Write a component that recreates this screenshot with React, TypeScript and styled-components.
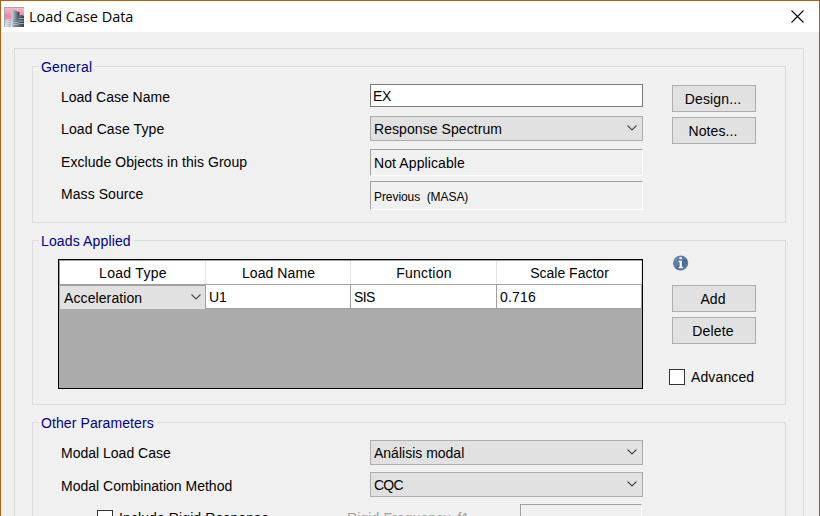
import React from "react";
import styled, { createGlobalStyle } from "styled-components";

const GlobalStyle = createGlobalStyle`
  * { box-sizing: border-box; }
  body { margin: 0; overflow: hidden; background: #f0f0f0; }
`;

const Window = styled.div`
  display: flex;
  flex-direction: column;
  width: 820px;
  height: 516px;
  overflow: hidden;
  border: 1px solid #b15f14;
  border-bottom: 0;
  background: #f0f0f0;
  color: #000;
  font: 14px "Liberation Sans", Arial, sans-serif;
`;

const TitleBar = styled.header`
  display: flex;
  flex: none;
  align-items: center;
  height: 31px;
  padding: 0 15px 0 3px;
  background: #fff;
`;

const Title = styled.h1`
  flex: 1;
  margin: 0 0 0 5px;
  font: 400 14.5px/20px "Open Sans", "Noto Sans", sans-serif;
  letter-spacing: -0.03px;
`;

const CloseButton = styled.button`
  display: flex;
  padding: 0;
  border: 0;
  background: none;
`;

const Client = styled.main`
  display: flex;
  flex: none;
  height: 600px;
  padding: 16px 15px 0 13px;
`;

const Panel = styled.div`
  display: flex;
  flex: 1;
  flex-direction: column;
  gap: 17px;
  padding: 17px 17px 0;
  border: 1px solid #dcdcdc;
`;

const Group = styled.section<{ $height: number }>`
  display: flex;
  flex: none;
  flex-direction: column;
  height: ${(p) => p.$height}px;
  border: 1px solid #dcdcdc;
`;

const Text = styled.span<{ $track?: number }>`
  letter-spacing: ${(p) => p.$track ?? 0.06}px;
  white-space: pre;
`;

const Legend = styled.h2`
  align-self: flex-start;
  height: 16px;
  margin: -8px 0 0 6px;
  padding: 0 3px 0 2px;
  background: #f0f0f0;
  color: #00008b;
  font-size: 14px;
  font-weight: 400;
  line-height: 17px;
`;

const GroupBody = styled.div`
  display: flex;
  align-items: flex-start;
`;

const Labels = styled.div<{ $rows: string; $top: number }>`
  display: grid;
  grid-template-rows: ${(p) => p.$rows};
  align-items: center;
  width: 337px;
  padding: ${(p) => p.$top}px 0 0 28px;
  line-height: 16px;
`;

const Fields = styled.div<{ $top: number }>`
  display: flex;
  flex-direction: column;
  width: 273px;
  padding-top: ${(p) => p.$top}px;
`;

const TextField = styled.div`
  height: 23px;
  margin-bottom: 9px;
  padding-left: 2px;
  border: 1px solid #7a7a7a;
  background: #fff;
  line-height: 23px;
`;

const Select = styled.div<{ $gap: number }>`
  display: flex;
  align-items: center;
  justify-content: space-between;
  height: 25px;
  margin-bottom: ${(p) => p.$gap}px;
  padding: 0 5px 0 3px;
  border: 1px solid #adadad;
  background: #e1e1e1;
  line-height: 16px;
`;

const Sunken = styled.div<{ $height: number; $small?: boolean }>`
  display: flex;
  align-items: center;
  height: ${(p) => p.$height}px;
  margin-bottom: 5px;
  padding: ${(p) => (p.$small ? 2 : 0)}px 0 0 3px;
  border: 1px solid;
  border-color: #a0a0a0 #fff #fff #a0a0a0;
  font-size: ${(p) => (p.$small ? 12 : 14)}px;
  line-height: 16px;
`;

const Side = styled.div<{ $top: number }>`
  display: flex;
  flex-direction: column;
  gap: 5px;
  width: 84px;
  margin-left: 29px;
  padding-top: ${(p) => p.$top}px;
`;

const Button = styled.button`
  display: flex;
  flex: none;
  align-items: center;
  justify-content: center;
  height: 27px;
  padding: 0 2px 0 0;
  border: 1px solid #adadad;
  background: #e1e1e1;
  color: #000;
  font: inherit;
  line-height: 16px;
`;

const InfoSlot = styled.div`
  display: flex;
  height: 25px;
`;

const CheckRow = styled.label`
  display: flex;
  align-items: center;
  gap: 6px;
  height: 16px;
  white-space: nowrap;
  line-height: 18px;
`;

const AdvancedRow = styled(CheckRow)`
  margin: 20px -6px 0 -3px;
`;

const CheckBox = styled.span`
  flex: none;
  width: 16px;
  height: 16px;
  border: 1px solid #333;
  background: #fff;
`;

const DataGrid = styled.div`
  width: 585px;
  height: 130px;
  margin: 10px 0 0 25px;
  border: 1px solid #000;
  background: #ababab;
`;

const GridRow = styled.div`
  display: grid;
  grid-template-columns: 146px 145px 146px 145px;
  border-left: 1px solid #a0a0a0;
`;

const HeaderRow = styled(GridRow)`
  height: 25px;
  border-top: 1px solid #a0a0a0;
  border-bottom: 1px solid #a0a0a0;
  background: #fff;
`;

const HeaderCell = styled.div`
  display: flex;
  align-items: center;
  justify-content: center;
  padding-left: 1px;
  border-right: 1px solid #e5e5e5;
  line-height: 16px;
`;

const Cell = styled.div`
  height: 24px;
  padding-left: 3px;
  border: solid #a0a0a0;
  border-width: 0 1px 1px 0;
  background: #fff;
  line-height: 25px;
`;

const SelectCell = styled(Cell)`
  display: flex;
  align-items: center;
  justify-content: space-between;
  padding: 0 4px 0 4px;
  border-width: 1px 1px 0 0;
  background: #e1e1e1;
  line-height: 16px;
`;

const OptionsRow = styled.div`
  display: flex;
  align-items: flex-start;
  padding-left: 64px;
`;

const RigidCheck = styled(CheckRow)`
  width: 250px;
  margin-top: 6px;
`;

const Frequency = styled.span`
  width: 173px;
  padding-top: 6px;
  color: #a0a0a0;
  line-height: 16px;
`;

const FrequencyBox = styled.div`
  width: 122px;
  height: 24px;
  border: 1px solid;
  border-color: #a0a0a0 #fff #fff #a0a0a0;
`;

const ChevronSvg = styled.svg`
  margin-top: -1px;
`;

const Chevron = () => (
  <ChevronSvg width="10" height="6" viewBox="0 0 10 6" fill="none" stroke="#4a4a4a" strokeWidth="1.1">
    <path d="M.5 .5 5 5 9.500 .5" />
  </ChevronSvg>
);

const AppIcon = () => (
  <svg width="20" height="20" viewBox="0 0 20 20">
    <defs>
      <linearGradient id="sky" x1="0" y1="0" x2="0" y2="1">
        <stop offset="0" stopColor="#f5c3d2" />
        <stop offset=".5" stopColor="#f07fa4" />
        <stop offset="1" stopColor="#fbe9ee" />
      </linearGradient>
      <linearGradient id="tower">
        <stop offset="0" stopColor="#d3dae2" />
        <stop offset=".45" stopColor="#8492a3" />
        <stop offset="1" stopColor="#34404f" />
      </linearGradient>
    </defs>
    <path fill="url(#sky)" d="M0 0h20v20H0z" />
    <path fill="none" stroke="#a9a5ac" d="M.5 20V.5H20" />
    <path fill="url(#tower)" d="M7.500 4.500l2-2 2 1V20h-4zM11.500 4l4 1v15h-4z" />
    <path fill="url(#tower)" d="M2 13l2.500-1.500L7 13v7H2zM14.500 9l3-1 2.500 1v11h-5.500zM9 13.500l3-1 2.500 1V20H9z" />
    <path stroke="#e6eaee" strokeWidth=".5" d="M2 14.500h5M2 16.500h5M2 18.500h5M14.500 11.500H20M14.500 14H20M14.500 16.500H20M9 15.500h5.500M9 17.500h5.500" />
  </svg>
);

const CloseIcon = () => (
  <svg width="13" height="13" viewBox="0 0 13 13" stroke="#000" strokeWidth="1.1">
    <path d="M.5 .5l12 12M12.500 .5l-12 12" />
  </svg>
);

const InfoIcon = () => (
  <svg width="17" height="16" viewBox="0 0 17 16">
    <defs>
      <linearGradient id="info" x1="0" y1="0" x2="1" y2="1">
        <stop offset="0" stopColor="#7290b4" />
        <stop offset=".5" stopColor="#57779f" />
        <stop offset=".55" stopColor="#486790" />
        <stop offset="1" stopColor="#6e8cad" />
      </linearGradient>
    </defs>
    <circle cx="8.600" cy="8" r="7.600" fill="url(#info)" />
    <path fill="#f4f6f8" d="M7.500 2.200h2.400v2H7.500zM6.500 5.800H9.900v6.200H11v1.200H6.500V12h1.100V7H6.500z" />
  </svg>
);

export default function App() {
  return (
    <>
      <GlobalStyle />
      <Window>
        <TitleBar>
          <AppIcon />
          <Title>Load Case Data</Title>
          <CloseButton aria-label="Close"><CloseIcon /></CloseButton>
        </TitleBar>
        <Client>
          <Panel>
            <Group $height={157}>
              <Legend><Text $track={0.2}>General</Text></Legend>
              <GroupBody>
                <Labels $top={6} $rows="32px 32px 33px 32px">
                  <Text $track={0}>Load Case Name</Text>
                  <Text $track={0.12}>Load Case Type</Text>
                  <Text $track={0.06}>Exclude Objects in this Group</Text>
                  <Text>Mass Source</Text>
                </Labels>
                <Fields $top={9}>
                  <TextField><Text $track={-0.3}>EX</Text></TextField>
                  <Select $gap={8}><Text $track={0.07}>Response Spectrum</Text><Chevron /></Select>
                  <Sunken $height={27}><Text $track={0.1}>Not Applicable</Text></Sunken>
                  <Sunken $height={29} $small><Text $track={-0.07}>Previous  (MASA)</Text></Sunken>
                </Fields>
                <Side $top={10}>
                  <Button><Text $track={0.14}>Design...</Text></Button>
                  <Button><Text $track={0.1}>Notes...</Text></Button>
                </Side>
              </GroupBody>
            </Group>

            <Group $height={165}>
              <Legend><Text $track={0.14}>Loads Applied</Text></Legend>
              <GroupBody>
                <DataGrid>
                  <HeaderRow>
                    <HeaderCell><Text $track={0.3}>Load Type</Text></HeaderCell>
                    <HeaderCell><Text $track={0.08}>Load Name</Text></HeaderCell>
                    <HeaderCell><Text $track={0.2}>Function</Text></HeaderCell>
                    <HeaderCell><Text $track={0}>Scale Factor</Text></HeaderCell>
                  </HeaderRow>
                  <GridRow>
                    <SelectCell><Text $track={0.1}>Acceleration</Text><Chevron /></SelectCell>
                    <Cell><Text $track={-0.1}>U1</Text></Cell>
                    <Cell><Text $track={-0.6}>SIS</Text></Cell>
                    <Cell><Text $track={0.19}>0.716</Text></Cell>
                  </GridRow>
                </DataGrid>
                <Side $top={6}>
                  <InfoSlot><InfoIcon /></InfoSlot>
                  <Button><Text>Add</Text></Button>
                  <Button><Text $track={0.16}>Delete</Text></Button>
                  <AdvancedRow><CheckBox /><Text $track={0.12}>Advanced</Text></AdvancedRow>
                </Side>
              </GroupBody>
            </Group>

            <Group $height={220}>
              <Legend><Text $track={0.1}>Other Parameters</Text></Legend>
              <GroupBody>
                <Labels $top={6} $rows="32px 33px">
                  <Text $track={0}>Modal Load Case</Text>
                  <Text $track={0}>Modal Combination Method</Text>
                </Labels>
                <Fields $top={9}>
                  <Select $gap={7}><Text $track={0}>Análisis modal</Text><Chevron /></Select>
                  <Select $gap={7}><Text $track={-0.8}>CQC</Text><Chevron /></Select>
                </Fields>
              </GroupBody>
              <OptionsRow>
                <RigidCheck><CheckBox /><Text $track={0.1}>Include Rigid Response</Text></RigidCheck>
                <Frequency><Text $track={0.11}>Rigid Frequency, f1</Text></Frequency>
                <FrequencyBox />
              </OptionsRow>
            </Group>
          </Panel>
        </Client>
      </Window>
    </>
  );
}
